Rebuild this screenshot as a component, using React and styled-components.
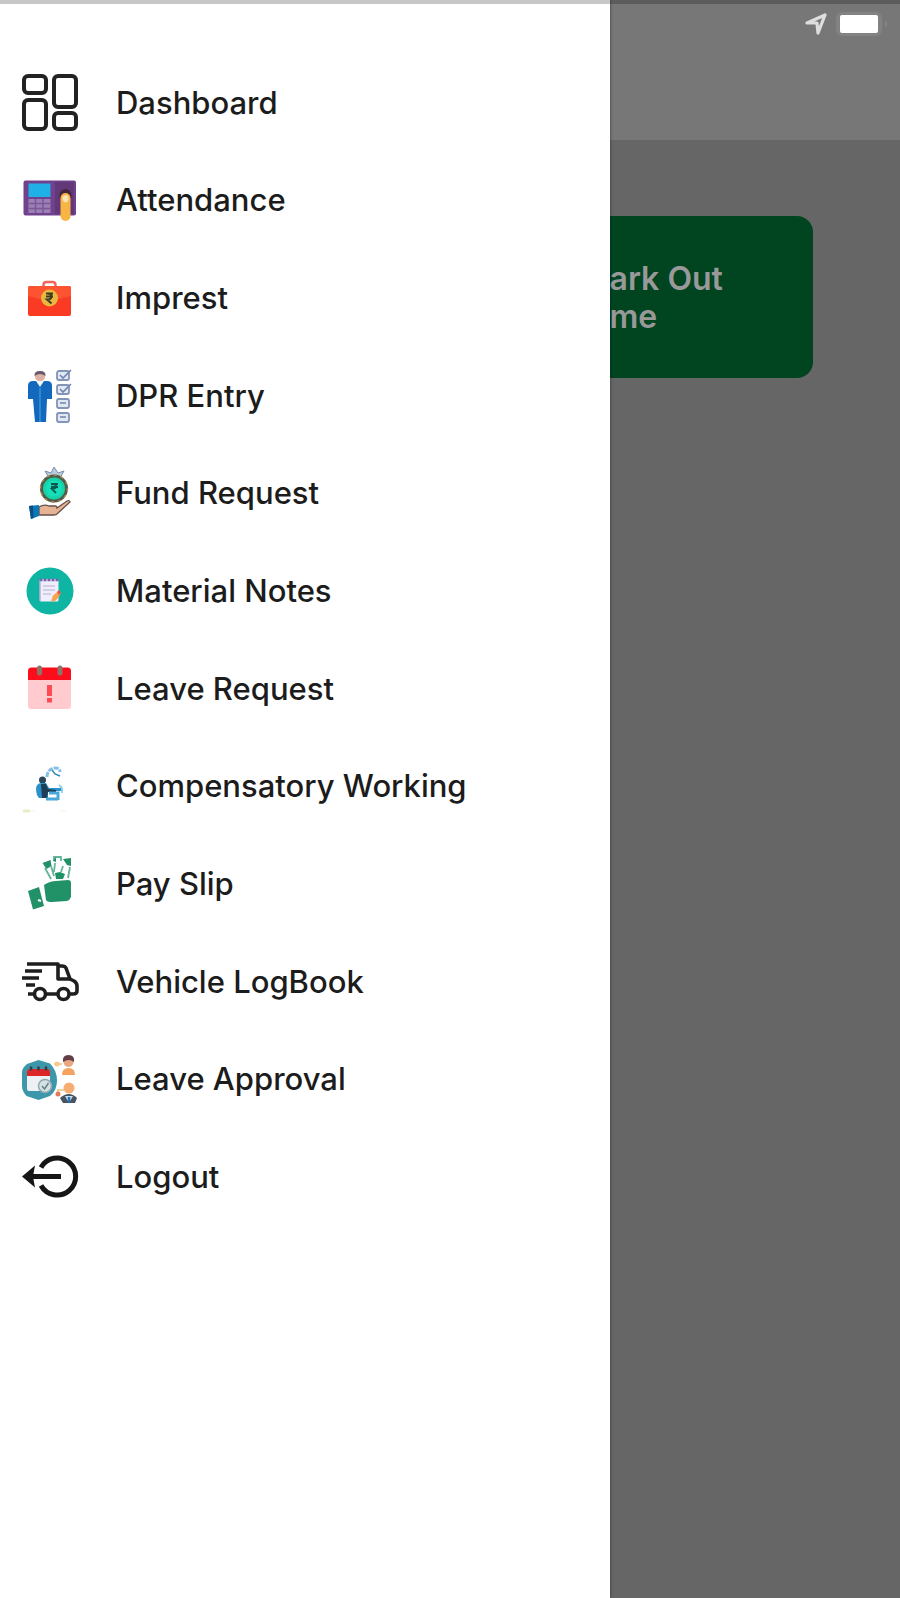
import React from 'react';
import styled, { createGlobalStyle } from 'styled-components';

const GlobalStyle = createGlobalStyle`
  * {
    box-sizing: border-box;
  }

  body {
    margin: 0;
    font-family: Inter, "Liberation Sans", sans-serif;
    background-color: #666666;
  }
`;

const Screen = styled.div`
  position: relative;
  min-height: 100vh;
  background-color: #666666;
  overflow: hidden;
`;

const TopEdge = styled.div`
  position: absolute;
  top: 0;
  left: 0;
  right: 0;
  height: 4px;
  background-color: rgba(0, 0, 0, 0.22);
  z-index: 20;
`;

const Header = styled.header`
  height: 140px;
  padding: 12px 9px;
  background-color: #777777;
`;

const StatusBar = styled.div`
  display: flex;
  justify-content: flex-end;
  align-items: center;
  gap: 8px;
`;

const Content = styled.main`
  display: flex;
  justify-content: flex-end;
  padding: 76px 87px 0 0;
`;

const MarkOutButton = styled.button`
  width: 272px;
  height: 162px;
  padding: 2px 39px 0;
  border: none;
  border-radius: 16px;
  background-color: #004420;
  color: #999999;
  font-family: inherit;
  font-size: 32px;
  font-weight: 600;
  line-height: 38px;
  text-align: left;
  cursor: pointer;
`;

const Drawer = styled.nav`
  position: absolute;
  top: 0;
  bottom: 0;
  left: 0;
  width: 67.8%;
  padding-top: 54px;
  background-color: #ffffff;
  box-shadow: 0 0 3px rgba(0, 0, 0, 0.5);
  z-index: 10;
`;

const MenuList = styled.ul`
  display: grid;
  grid-auto-rows: 1fr;
  height: 1172px;
  margin: 0;
  padding: 0;
  list-style: none;
`;

const MenuLink = styled.a`
  display: flex;
  align-items: center;
  gap: 38px;
  height: 100%;
  padding: 0 22px;
  color: #1c1c1c;
  font-size: 31px;
  font-weight: 500;
  line-height: 40px;
  text-decoration: none;
`;

const Icon = styled.svg`
  flex: none;
  width: 56px;
  height: 56px;
  overflow: visible;
`;

const DashboardIcon = () => (
  <Icon viewBox="0 0 56 56" fill="none" stroke="#222" strokeWidth="4">
    <rect x="2" y="1" width="22" height="17" rx="4" />
    <rect x="32" y="1" width="22" height="31" rx="4" />
    <rect x="2" y="25" width="22" height="29" rx="4" />
    <rect x="32" y="38" width="22" height="16" rx="4" />
  </Icon>
);

const AttendanceIcon = () => (
  <Icon viewBox="0 -1 56 56">
    <rect x="1.5" y="7.5" width="52.5" height="35" rx="2" fill="#70418c" />
    <rect x="33" y="9" width="19" height="32" fill="#633879" />
    <rect x="6.5" y="10.5" width="22" height="13.5" fill="#1eb0e6" />
    <rect x="6.5" y="26" width="22" height="14" fill="#9b7fb5" />
    <path d="M7 30.5h21M7 35.5h21M13.5 26v14M21 26v14" stroke="#7a5898" strokeWidth="1.5" />
    <path d="M37.5 25v-3a6 6 0 0 1 12 0v3z" fill="#42263f" />
    <path d="M38.5 43V25a5 5 0 0 1 10 0v18a5 5 0 0 1-10 0z" fill="#f8b544" />
    <path d="M40.5 27v-2a3 3 0 0 1 6 0v2q-3 5-6 0z" fill="#fbe3b4" />
  </Icon>
);

const ImprestIcon = () => (
  <Icon viewBox="0 -1 56 56">
    <path d="M21.5 16v-2q0-3 3-3h6q3 0 3 3v2" fill="none" stroke="#f2635c" strokeWidth="2.4" />
    <rect x="6" y="15" width="43" height="30" rx="2" fill="#fb3a24" />
    <path d="M6 17q0-2 2-2h39q2 0 2 2v8q-22 7-43 0z" fill="#fc5330" />
    <circle cx="27.5" cy="27" r="8.5" fill="#e9b83c" />
    <path d="M24 22.5h7M24 25.5h7M25 22.5c6 0 6 6 0 6l4.5 4" fill="none" stroke="#3d3b26" strokeWidth="2" />
  </Icon>
);

const DprIcon = () => (
  <Icon viewBox="0 -1 56 56">
    <circle cx="18" cy="7.5" r="5" fill="#deb0a3" />
    <path d="M12.5 7q-.5-5 5.5-5t5.5 5q-5.5-4-11 0z" fill="#665b6b" />
    <path d="M6 17q0-5 5-5h14q5 0 5 5v13h-5l-1 23H13l-2-23H6z" fill="#1268bd" />
    <path d="M14 12h8l-4 6z" fill="#eff5fb" />
    <path d="M18 19v34" stroke="#2f87cf" strokeWidth="2" />
    <g fill="#e2e8f3" stroke="#8294b8" strokeWidth="1.8">
      <rect x="35" y="2" width="12" height="9" rx="2" />
      <rect x="35" y="16" width="12" height="9" rx="2" />
      <rect x="35" y="30" width="12" height="9" rx="2" />
      <rect x="35" y="44" width="12" height="9" rx="2" />
    </g>
    <path d="M38 6l3 3 8-8M38 20l3 3 8-8M38 34h6M38 48h6" fill="none" stroke="#7083ad" strokeWidth="1.6" />
  </Icon>
);

const FundIcon = () => (
  <Icon viewBox="0 -1 56 56">
    <path d="M23 5l6 2 3-6 4 6 6-2-4 7H27z" fill="#b8cbdc" stroke="#7891aa" strokeWidth="1" />
    <circle cx="32" cy="22.5" r="12.5" fill="#17d3a8" stroke="#4f5c4d" strokeWidth="3" />
    <circle cx="32" cy="22.5" r="13.5" fill="none" stroke="#b4914e" strokeWidth="1.4" strokeDasharray="3 4" />
    <circle cx="32" cy="22.5" r="8" fill="#16e0bc" />
    <path d="M29 18h7M29 21h7M30 18c6 0 5 5 0 5l4 4" fill="none" stroke="#0b584e" strokeWidth="1.8" />
    <path d="M17 41q5-3 10-1h6q2 0 2 2l10-7q3-1 3 1L36 47q-1 2-4 2H17z" fill="#e6b492" stroke="#66504b" strokeWidth="1.3" />
    <path d="M7 40l10-1v11l-8 3z" fill="#0878b8" />
    <path d="M7 40l4-.5.5 12.5-2.5 1z" fill="#0b4f83" />
  </Icon>
);

const MaterialIcon = () => (
  <Icon viewBox="0 -1 56 56">
    <circle cx="28" cy="27" r="23.5" fill="#0fb5a3" />
    <rect x="17.5" y="15" width="19" height="22.5" rx="1.5" fill="#efeefa" />
    <path d="M17.5 16h19" stroke="#7564ad" strokeWidth="2.4" strokeDasharray="3 1" />
    <path d="M18 16v21" stroke="#9b91cc" strokeWidth="1" />
    <path d="M21 22h12M21 26h12M21 30h8" stroke="#c9c6e4" strokeWidth="1.5" />
    <path d="M29 37.5l2-6 6-5 2 3-5 7z" fill="#f7a450" />
    <path d="M35 28l2-2 2 3-2 2z" fill="#e1574f" />
  </Icon>
);

const LeaveRequestIcon = () => (
  <Icon viewBox="0 -1 56 56">
    <path d="M6 18h43v26q0 3-3 3H9q-3 0-3-3z" fill="#ffcbce" />
    <path d="M6 18v-9q0-3.5 3.5-3.5h36Q49 5.5 49 9v9z" fill="#fb0d1b" />
    <path d="M17.5 6v5M38 6v5" stroke="#8d746b" strokeWidth="5" strokeLinecap="round" />
    <path d="M27.5 23v11" stroke="#fb4b54" strokeWidth="5" />
    <path d="M27.5 36v4.5" stroke="#fb4b54" strokeWidth="5" />
  </Icon>
);

const CompensatoryIcon = () => (
  <Icon viewBox="0 -1 56 56">
    <path d="M25 18c0-6 4-9 8-9s5 2 5 4" fill="none" stroke="#87bfe4" strokeWidth="3" strokeDasharray="5 1" />
    <path d="M30 11l3 4 5 2" fill="none" stroke="#3388bb" strokeWidth="1.5" />
    <circle cx="20.5" cy="21" r="3.5" fill="#2d4659" />
    <path d="M14 29q1-5 6-5h4l3 5h12l2 3H26v7h-9q-3-3-3-10z" fill="#2a91cb" />
    <path d="M19 25h5l2 5 8 1v2h-8l-1 6h-5z" fill="#203d56" />
    <path d="M27 34h9v7M24 40h12" fill="none" stroke="#49a7da" strokeWidth="3" />
    <path d="M37 26l3 3v5" fill="none" stroke="#8bd0ee" strokeWidth="1.8" />
    <path d="M2 52h5" stroke="#e9ecc6" strokeWidth="3" strokeLinecap="round" />
    <path d="M8 52h5M38 52h6" stroke="#fafaec" strokeWidth="2" />
  </Icon>
);

const PaySlipIcon = () => (
  <Icon viewBox="0 -1 56 56" fill="#219268">
    <path d="M22 28q6-4 12-4l12-1q3 0 3 3v14q-1 3-4 4l-15 1q-5 0-6-2z" />
    <path d="M6 34l11-4 5 19-11 3.5z" />
    <path d="M16 43l3 1" stroke="#fff" strokeWidth="2" />
    <path d="M20.5 6l8-3 1 6-5 3z" />
    <path d="M41 2l8-1v8l-4-1z" />
    <path d="M32 4V0h7v4M23 11l6 11M29 9l3 10M33 6l-1 9M41 9l-2 6M48 10l-2 11" fill="none" stroke="#62b598" strokeWidth="1.8" />
    <path d="M31 4l3-4v5zM33 16l5-1 5 2-2 5h-7z" />
  </Icon>
);

const TruckIcon = () => (
  <Icon viewBox="0 -1 56 56" fill="none" stroke="#1f1f1f" strokeWidth="3.6" strokeLinejoin="round">
    <path d="M5 9h31v15h12l-4-11q-1-2-4-2h-4" />
    <path d="M48 24l4 2q3 2 3 5v5q0 3-4 3h-3M24 39h11M6 39h6" />
    <path d="M3 16h17M0 23h17M4 30h9" />
    <circle cx="18" cy="39" r="5.5" />
    <circle cx="41.5" cy="39" r="5.5" />
  </Icon>
);

const ApprovalIcon = () => (
  <Icon viewBox="0 -2 56 56">
    <path d="M16.5 7L28 10.5q7 7 7 17t-7 15.5l-11.5 4-12-4q-4.5-5-4.5-10V19q0-4 5-8z" fill="#3d97aa" />
    <rect x="5" y="17" width="23" height="21" rx="2" fill="#edf1f3" />
    <path d="M5 23v-4q0-3 3-3h17q3 0 3 3v4z" fill="#df2627" />
    <path d="M9 13.5v4M16.5 13.5v4M24 13.5v4" stroke="#33404b" strokeWidth="2.5" />
    <circle cx="23" cy="33" r="6.5" fill="#d7e1e4" stroke="#91a9b2" strokeWidth="1.5" />
    <path d="M20 33l2.5 3 4-6" fill="none" stroke="#64818d" strokeWidth="1.5" />
    <path d="M32 11h8M36 40v-3h6" fill="none" stroke="#f6cf9c" strokeWidth="2" />
    <circle cx="35" cy="11" r="2.5" fill="#f9c987" />
    <circle cx="36" cy="41" r="2.5" fill="#e77a58" />
    <circle cx="46.5" cy="9" r="5" fill="#e9a680" />
    <path d="M41 9q-1-7 5.5-7t5.5 7q-5-4-11 0z" fill="#643f48" />
    <path d="M40 22q0-7 6.5-7t6.5 7z" fill="#f3a261" />
    <circle cx="47" cy="35" r="5.5" fill="#f5ad71" />
    <path d="M38 45q9-8 17 0l-2 5H41z" fill="#47535e" />
    <path d="M43 43h8l-4 7z" fill="#c5def3" />
    <path d="M47 44v6" stroke="#286eb3" strokeWidth="2.5" />
  </Icon>
);

const LogoutIcon = () => (
  <Icon viewBox="0 -1 56 56" fill="none" stroke="#161616" strokeWidth="5">
    <path d="M19 17.5a18.5 18.5 0 1 1 0 18" />
    <path d="M6 26.5h33" />
    <path d="M0 26.5l13-11-2 11 2 11z" fill="#161616" stroke="none" />
  </Icon>
);

const menuItems = [
  { label: 'Dashboard', icon: DashboardIcon },
  { label: 'Attendance', icon: AttendanceIcon },
  { label: 'Imprest', icon: ImprestIcon },
  { label: 'DPR Entry', icon: DprIcon },
  { label: 'Fund Request', icon: FundIcon },
  { label: 'Material Notes', icon: MaterialIcon },
  { label: 'Leave Request', icon: LeaveRequestIcon },
  { label: 'Compensatory Working', icon: CompensatoryIcon },
  { label: 'Pay Slip', icon: PaySlipIcon },
  { label: 'Vehicle LogBook', icon: TruckIcon },
  { label: 'Leave Approval', icon: ApprovalIcon },
  { label: 'Logout', icon: LogoutIcon },
];

const App = () => {
  return (
    <>
      <GlobalStyle />
      <Screen>
        <TopEdge />
        <Header>
          <StatusBar>
            <svg width="22" height="24" viewBox="0 0 22 24">
              <path d="M2 11L20 3l-7 18-1-10z" fill="none" stroke="#dedede" strokeWidth="3.2" strokeLinejoin="round" />
            </svg>
            <svg width="56" height="24" viewBox="0 0 56 24">
              <rect x="1" y="0" width="46" height="24" rx="6" fill="#828282" />
              <rect x="5" y="3" width="38" height="18" rx="2" fill="#ffffff" />
              <path d="M50 9q4 3 0 6z" fill="#868686" />
            </svg>
          </StatusBar>
        </Header>
        <Content>
          <MarkOutButton type="button">
            Mark Out
            <br />
            Time
          </MarkOutButton>
        </Content>
        <Drawer aria-label="Main menu">
          <MenuList>
            {menuItems.map(({ label, icon: ItemIcon }) => (
              <li key={label}>
                <MenuLink href="#">
                  <ItemIcon />
                  {label}
                </MenuLink>
              </li>
            ))}
          </MenuList>
        </Drawer>
      </Screen>
    </>
  );
};

export default App;
